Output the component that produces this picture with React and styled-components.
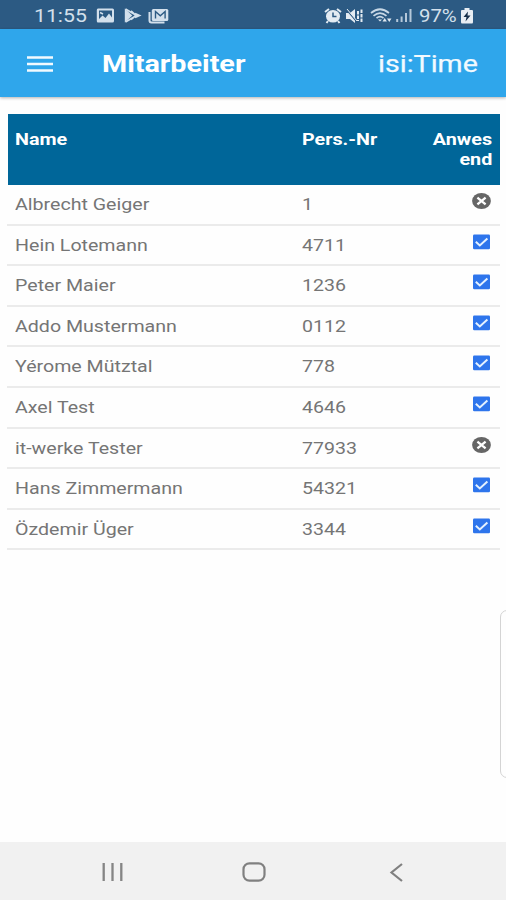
import React from "react";
import styled, { createGlobalStyle } from "styled-components";

const Global = createGlobalStyle`
  * { box-sizing: border-box; }
  body { margin: 0; background: #fefefe; font-family: Roboto, "Liberation Sans", sans-serif; }
`;

const Screen = styled.div`
  position: relative;
  width: 506px;
  height: 900px;
  display: flex;
  flex-direction: column;
  overflow: hidden;
  background: #fefefe;
`;

const Stretch = styled.span`
  display: inline-block;
  white-space: pre;
  transform: scaleX(${(p) => p.$x || 1.19});
  transform-origin: ${(p) => p.$origin || "left"} center;
`;

const StatusBar = styled.div`
  flex: none;
  height: 29px;
  display: flex;
  align-items: center;
  justify-content: space-between;
  padding: 2px 33px 0 34px;
  background: #2c5a83;
  color: #d3e0ec;
  font-size: 18px;
  line-height: 27px;
`;

const StatusGroup = styled.div`
  display: flex;
  align-items: center;
  height: 27px;
`;

const Clock = styled.div`
  width: 62px;
`;

const Percent = styled.div`
  width: 42px;
  margin-left: 6px;
`;

const Glyph = styled.svg`
  display: block;
  flex: none;
  margin-right: ${(p) => p.$gap || 0}px;
  overflow: visible;
`;

const AppBar = styled.header`
  flex: none;
  height: 68px;
  display: flex;
  align-items: center;
  padding: 2px 28px 0 27px;
  background: #2fa6eb;
  color: #fff;
  box-shadow: 0 1px 3px rgba(0, 0, 0, 0.3);
`;

const MenuButton = styled.button`
  width: 75px;
  padding: 0;
  border: 0;
  background: none;
  color: #f2faff;
`;

const Title = styled.h1`
  flex: 1;
  margin: 0;
  font-size: 24px;
  line-height: 28px;
  font-weight: 700;
`;

const Brand = styled.div`
  font-size: 24px;
  line-height: 28px;
  color: #f2faff;
  -webkit-text-stroke: 0.25px #f2faff;
`;

const Main = styled.main`
  flex: 1;
  padding: 16px 6px 0 7px;
`;

const HeadRow = styled.div`
  display: grid;
  grid-template-columns: 287px 1fr 80px;
  height: 71.5px;
  margin: 0.5px 0.5px 0 0.5px;
  padding: 15.5px 7px 0 7.5px;
  background: #006699;
  color: #fff;
  font-size: 17px;
  line-height: 20px;
  font-weight: 700;
`;

const HeadEnd = styled.div`
  display: flex;
  flex-direction: column;
  align-items: flex-end;
`;

const Row = styled.div`
  display: grid;
  grid-template-columns: 287px 1fr 21px;
  height: 40.6px;
  padding: 9px 8px 0 8px;
  border-bottom: 2px solid #ebebeb;
  color: #757575;
  font-size: 17px;
  line-height: 21px;
`;

const Mark = styled.div`
  margin-top: -1px;
`;

const EdgePanel = styled.div`
  position: absolute;
  left: 500px;
  top: 610px;
  width: 20px;
  height: 168px;
  border: 1.5px solid #d4d4d4;
  border-radius: 7px;
  background: #fefefe;
`;

const NavBar = styled.nav`
  flex: none;
  height: 58px;
  display: grid;
  grid-template-columns: 140px 148px 13px;
  align-items: center;
  padding: 2px 103px 0 102px;
  background: #f1f1f1;
`;

const people = [
  ["Albrecht Geiger", "1", false],
  ["Hein Lotemann", "4711", true],
  ["Peter Maier", "1236", true],
  ["Addo Mustermann", "0112", true],
  ["Yérome Mütztal", "778", true],
  ["Axel Test", "4646", true],
  ["it-werke Tester", "77933", false],
  ["Hans Zimmermann", "54321", true],
  ["Özdemir Üger", "3344", true],
];

const Check = () => (
  <Glyph width="21" height="16" viewBox="0 0 21 16">
    <rect x="2" y="0.5" width="17" height="14.8" rx="1.2" fill="#2e75ec" />
    <path d="M4.800 7.8l4 3.6 7.600-7" fill="none" stroke="#e4f1ff" strokeWidth="2" />
  </Glyph>
);

const Absent = () => (
  <Glyph width="21" height="17" viewBox="0 0 21 17">
    <ellipse cx="10.5" cy="8" rx="9.4" ry="8" fill="#666" />
    <path d="M6.4 4.6l8.200 6.8M14.6 4.6l-8.200 6.8" stroke="#fff" strokeWidth="2.3" />
  </Glyph>
);

export default function App() {
  return (
    <Screen>
      <Global />
      <StatusBar>
        <StatusGroup>
          <Clock><Stretch $x={1.18}>11:55</Stretch></Clock>
          <Glyph $gap={9} width="19" height="15" viewBox="0 0 19 15">
            <path fillRule="evenodd" fill="#d3e0ec" d="M2 0.5h14.5q1.5 0 1.5 1.5v11q0 1.5-1.5 1.5H2Q.8 14.5.8 13V2Q.8.5 2 .5zM3 2.5v8.6l3.500-3.600 3 2.500 3.500-4.500 3 4v-7z" />
            <path d="M4 4.5l3 1.5" stroke="#d3e0ec" strokeWidth="1.5" />
          </Glyph>
          <Glyph $gap={7} width="17" height="15" viewBox="0 0 17 15">
            <path fill="#d3e0ec" d="M.8.5v14l7.5-7z" />
            <path d="M1.5 1l11 6.5-11 6.5M7 3l5 4.5-5 4M11 5.5l4.5 2-4.5 2" fill="none" stroke="#d3e0ec" strokeWidth="1.7" />
          </Glyph>
          <Glyph width="22" height="16" viewBox="0 0 22 16">
            <path d="M1.5 4v8.5q0 2 2 2h13" fill="none" stroke="#d3e0ec" strokeWidth="2" />
            <rect x="3.800" y="1" width="16.500" height="12" rx="1.5" fill="#d3e0ec" />
            <path d="M7.5 10.500V3.500l4.800 4.200 4.800-4.200v7" fill="none" stroke="#2c5a83" strokeWidth="1.4" />
          </Glyph>
        </StatusGroup>
        <StatusGroup>
          <Glyph $gap={3} width="18" height="16" viewBox="0 0 18 16">
            <ellipse cx="9" cy="8.2" rx="7" ry="6.3" fill="#e3ebf2" />
            <path d="M1 4l4-3M17 4l-4-3M4 13l-1.5 2M14 13l1.5 2" stroke="#e3ebf2" strokeWidth="2" />
            <path d="M9 4.5v4h3.5" fill="none" stroke="#2c5a83" strokeWidth="1.5" />
          </Glyph>
          <Glyph $gap={7} width="18" height="16" viewBox="0 0 18 16">
            <path d="M1 5h4l5-4v14l-5-4H1z" fill="#e3ebf2" />
            <path d="M1 1l11 13" stroke="#2c5a83" strokeWidth="1.2" />
            <path d="M2 1l10 12" stroke="#e3ebf2" strokeWidth="1" />
            <path d="M13 3v10M16.5 1.5v13" stroke="#e3ebf2" strokeWidth="2" strokeDasharray="3.5 1" />
          </Glyph>
          <Glyph $gap={4} width="22" height="15" viewBox="0 0 22 15">
            <path d="M1 5Q10 -2.5 19 5M3.5 7.8q6.500-5.500 13 0M6.5 10.2q3.500-3 7 0" fill="none" stroke="#c8d8e6" strokeWidth="1.7" />
            <path d="M8 11.5h4l-2 2zM12.500 13.500l2.200-3.500 2.200 3.500zM17 10.500h4.500l-2.200 3.500z" fill="#dfe8f0" />
          </Glyph>
          <Glyph width="17" height="15" viewBox="0 0 17 15">
            <path d="M1.2 11v3M5.6 8.500v5.500M10 5V14M14.5 1V14" stroke="#b5c8da" strokeWidth="2" />
          </Glyph>
          <Percent><Stretch $x={1.13}>97%</Stretch></Percent>
          <Glyph width="12" height="16" viewBox="0 0 12 16">
            <path d="M3.5 0h5v2H11q1 0 1 1v11q0 1.5-1 1.5H1q-1 0-1-1.5V3q0-1 1-1h2.5z" fill="#e8eef4" />
            <path d="M7 3.5L2.5 9H5.500L4.5 13.5 9.500 7.500H6.500z" fill="#162f49" />
          </Glyph>
        </StatusGroup>
      </StatusBar>
      <AppBar>
        <MenuButton aria-label="Menu">
          <Glyph width="26" height="16" viewBox="0 0 26 16">
            <path d="M0 1.500h26M0 8h26M0 14.500h26" stroke="currentColor" strokeWidth="2.3" />
          </Glyph>
        </MenuButton>
        <Title><Stretch $x={1.197}>Mitarbeiter</Stretch></Title>
        <Brand><Stretch $origin="right">isi:Time</Stretch></Brand>
      </AppBar>
      <Main>
        <HeadRow>
          <div><Stretch $x={1.16}>Name</Stretch></div>
          <div><Stretch $x={1.16}>Pers.-Nr</Stretch></div>
          <HeadEnd>
            <Stretch $x={1.16} $origin="right">Anwes</Stretch>
            <Stretch $x={1.16} $origin="right">end</Stretch>
          </HeadEnd>
        </HeadRow>
        {people.map(([name, number, present]) => (
          <Row key={name}>
            <div><Stretch $x={1.153}>{name}</Stretch></div>
            <div><Stretch $x={1.15}>{number}</Stretch></div>
            <Mark>{present ? <Check /> : <Absent />}</Mark>
          </Row>
        ))}
      </Main>
      <EdgePanel />
      <NavBar>
        <Glyph width="21" height="20" viewBox="0 0 21 20">
          <path d="M1.7 1v18M10.5 1v18M19.3 1v18" stroke="#858585" strokeWidth="2.3" />
        </Glyph>
        <Glyph width="24" height="20" viewBox="0 0 24 20">
          <rect x="1.5" y="1.3" width="21" height="17.4" rx="6" fill="none" stroke="#808080" strokeWidth="2.2" />
        </Glyph>
        <Glyph width="13" height="19" viewBox="0 0 13 19">
          <path d="M12 1L1.5 9.5 12 18" fill="none" stroke="#808080" strokeWidth="2.2" />
        </Glyph>
      </NavBar>
    </Screen>
  );
}
